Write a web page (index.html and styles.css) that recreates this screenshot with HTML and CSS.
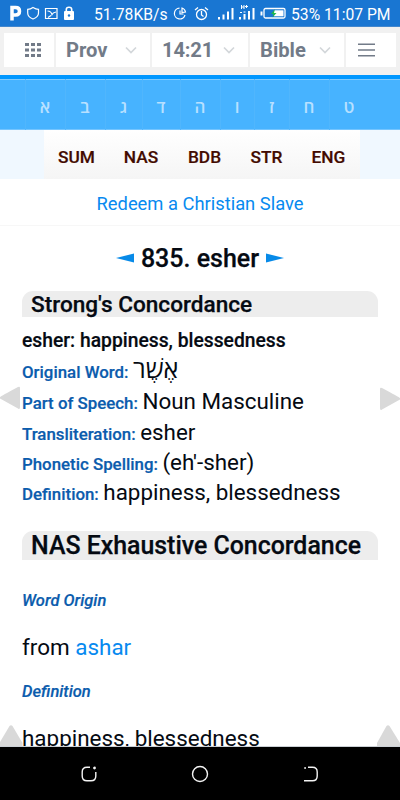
FILE: index.html
```html
<!DOCTYPE html>
<html lang="en">
<head>
<meta charset="utf-8">
<title>Strong's Hebrew: 835. esher</title>
<link rel="stylesheet" href="styles.css">
</head>
<body>
<div class="phone">
  <header class="status">
    <svg class="status-left" width="60" height="27" viewBox="0 0 60 27" fill="none" stroke="#fff">
      <path d="M12 20.500V7.500H15.500Q19.500 7.500 19.500 11.200T15.500 15H12" stroke-width="3.500"/>
      <path d="M33 7.500Q36 9.300 38.500 9.300V13Q38.500 17 33 19Q27.700 17 27.700 13V9.300Q30.500 9.300 33 7.500Z" stroke-width="1.200"/>
      <path d="M45.500 8.500H57V18.500H45.500ZM47.500 11Q51 11 52 14.500Q53 12.500 56 12M48 17.500L51 15.500" stroke-width="1.200"/>
    </svg>
    <svg class="lock" width="12" height="27" viewBox="0 0 12 27" fill="none">
      <path d="M3.300 12V9.500Q3.300 7.300 6 7.300T8.700 9.500V12" stroke="#fff" stroke-width="1.600"/>
      <rect x="1" y="11" width="10" height="9" rx="1" fill="#fff"/><circle cx="6" cy="15.500" r="1.200" fill="#1976d2"/>
    </svg>
    <span class="speed">51.78KB/s</span>
    <svg class="status-mid" width="117" height="27" viewBox="171 0 117 27" fill="none" stroke="#fff">
      <path d="M179.500 8.200A5.400 5.400 0 1 0 185 15M180 10.500V14H183.500M182 8Q185 9 185.500 12L182 12.500Z" stroke-width="1.200"/>
      <circle cx="201.500" cy="14.500" r="5" stroke-width="1.300"/><path d="M201.500 11V15L203.500 16.500M195 10L198 7.500M205 7.500L208 10" stroke-width="1.300"/>
      <path d="M219 19.500V17M223.500 19.500V14.500M228 19.500V11.500M232.500 19.500V8" stroke-width="2"/>
      <path d="M240 19.500V17M244.500 19.500V14M249 19.500V11M253.500 19.500V8" stroke-width="2"/>
      <path d="M241.500 5V9M244 5V9M241.500 7H244M245 6.500H248M246.500 5V8M240 12.500H242M243.500 12H245.500" stroke-width="1"/>
      <rect x="264" y="8.500" width="21" height="9.500" rx="1.500" stroke-width="1.300"/><path d="M261.500 11.500V15.500" stroke-width="2"/>
      <rect x="274" y="10.300" width="9.500" height="6" fill="#fff" stroke="none"/><path d="M275 9L271 14H273.500L272.500 17.500L276.500 13H274Z" fill="#20b84a" stroke="none"/>
    </svg>
    <span class="clock">53% 11:07 PM</span>
  </header>

  <nav class="toolbar">
    <div class="cell dots">
      <svg width="18" height="16" viewBox="0 0 18 16" fill="#727b88"><path d="M1 1h4v3H1zM7 1h4v3H7zM13 1h4v3H13zM1 6.500h4v3H1zM7 6.500h4v3H7zM13 6.500h4v3H13zM1 12h4v3H1zM7 12h4v3H7zM13 12h4v3H13z"/></svg>
    </div>
    <div class="cell pick book"><span>Prov</span><svg class="chev" viewBox="0 0 12 8"><path d="M1 1.500L6 6.500L11 1.500"/></svg></div>
    <div class="cell pick verse"><span>14:21</span><svg class="chev" viewBox="0 0 12 8"><path d="M1 1.500L6 6.500L11 1.500"/></svg></div>
    <div class="cell pick bible"><span>Bible</span><svg class="chev" viewBox="0 0 12 8"><path d="M1 1.500L6 6.500L11 1.500"/></svg></div>
    <div class="cell menu"><svg width="17" height="14" viewBox="0 0 17 14" stroke="#727b88" stroke-width="1.500"><path d="M0 1.200H17M0 7H17M0 12.700H17"/></svg></div>
  </nav>

  <nav class="letters">
    <span>א</span><span>ב</span><span>ג</span><span>ד</span><span>ה</span><span>ו</span><span>ז</span><span>ח</span><span>ט</span>
  </nav>

  <nav class="tabs">
    <div class="tabset"><span>SUM</span><span>NAS</span><span>BDB</span><span>STR</span><span>ENG</span></div>
  </nav>

  <div class="promo"><a>Redeem a Christian Slave</a></div>

  <main class="content">
    <h1><svg width="18" height="10" viewBox="0 0 18 10"><path d="M0 5L18 .5V9.500Z"/></svg><span>835. esher</span><svg width="18" height="10" viewBox="0 0 18 10"><path d="M18 5L0 .5V9.500Z"/></svg></h1>
    <h2 class="strongs"><span>Strong's Concordance</span></h2>
    <p class="summary">esher: happiness, blessedness</p>
    <p class="row"><b>Original Word:</b><span class="hebrew" lang="he">אֶשֶׁר</span></p>
    <p class="row"><b>Part of Speech:</b><span>Noun Masculine</span></p>
    <p class="row"><b>Transliteration:</b><span>esher</span></p>
    <p class="row"><b>Phonetic Spelling:</b><span>(eh'-sher)</span></p>
    <p class="row"><b>Definition:</b><span>happiness, blessedness</span></p>
    <h2 class="nas"><span>NAS Exhaustive Concordance</span></h2>
    <h3>Word Origin</h3>
    <p class="text">from <a>ashar</a></p>
    <h3>Definition</h3>
    <p class="text">happiness, blessedness</p>
    <svg class="arrow prev" width="20" height="24" viewBox="0 0 20 24"><path d="M0 11Q1 10 18 1Q20 0 20 2V21Q20 24 18 22.500L0 12.500Z"/></svg>
    <svg class="arrow next" width="20" height="24" viewBox="0 0 20 24"><path d="M20 11Q19 10 2 1Q0 0 0 2V21Q0 24 2 22.500L20 12.500Z"/></svg>
    <svg class="arrow up-left" width="23" height="21" viewBox="0 0 23 21"><path d="M0 17L9.500 1Q11 -.5 12.500 1L22.500 18V21H0Z"/></svg>
    <svg class="arrow up-right" width="23" height="21" viewBox="0 0 23 21"><path d="M0 18L9.500 1Q11 -.5 12.500 1L23 18V21H0Z"/></svg>
  </main>

  <footer class="navbar">
    <svg width="16" height="16" viewBox="0 0 16 16"><path d="M9 1.200H6Q1.200 1.200 1.200 6V10Q1.200 14.800 6 14.800H10Q14.800 14.800 14.800 10V6"/><circle cx="13.500" cy="2" r=".7"/></svg>
    <svg width="18" height="18" viewBox="0 0 18 18"><circle cx="9" cy="9" r="7.500"/></svg>
    <svg width="16" height="16" viewBox="0 0 16 16"><path d="M5 1.200H9.500Q14.200 1.200 14.200 6V10Q14.200 14.800 9.500 14.800H1M1.200 2H3"/></svg>
  </footer>
</div>
</body>
</html>
```

FILE: styles.css
```css
* { box-sizing: border-box; }
body { margin: 0; font-family: Roboto, "Liberation Sans", sans-serif; background: #fff; }
h1, h2, h3, p { margin: 0; font-weight: 400; white-space: nowrap; }
a { color: #078af0; }
svg { flex: none; display: block; }
.phone { width: 400px; height: 800px; overflow: hidden; display: flex; flex-direction: column; }

.status { height: 27px; flex: none; background: #1976d2; color: #fff; display: flex; align-items: center; font-size: 16px; line-height: 27px; white-space: nowrap; border-bottom: 1px solid #4387cd; }
.lock { margin-left: 3px; }
.speed { width: 76px; margin-left: 19px; padding-top: 2px; font-size: 15.700px; }
.status-mid { margin-left: 1px; }
.clock { margin-left: 3px; padding-top: 2px; font-size: 15.700px; }

.toolbar { height: 48px; flex: none; background: #f1f1f1; display: grid; grid-template-columns: 50px 94px 96px 94px 50px; gap: 2px; padding: 6px 4px 8px; }
.cell { background: #fff; display: flex; align-items: center; }
.dots { padding-left: 20px; }
.menu { padding-left: 12px; }
.pick { justify-content: space-between; padding: 0 13px 0 10px; color: #727b88; font-weight: 700; font-size: 20.200px; }
.verse span { letter-spacing: -.2px; }
.chev { width: 12px; height: 8px; fill: none; stroke: #d3d7da; stroke-width: 1.7; }

.letters { height: 55px; flex: none; background: #47b3ff; border-top: 4px solid #0097ff; border-bottom: 1px solid #75c5ff; box-shadow: inset 0 1px #80cbff; display: grid; grid-template-columns: 40px 40px 37px 38px 40px 34px 35px 40px 40px; padding-left: 25px; color: #b8e0ff; font: 600 17px/56px "Open Sans", sans-serif; text-align: center; }
.letters span { border-left: 1px solid #50b6fd; padding-right: 1px; }

.tabs { height: 49px; flex: none; background: #f0f8ff; padding: 0 40px 0 44px; }
.tabset { height: 49px; display: grid; grid-template-columns: 65px 64px 63px 61px 63px; background: linear-gradient(#fff, #f5f5f5); color: #430b00; font-size: 17.300px; font-weight: 500; line-height: 54px; text-align: center; -webkit-text-stroke: .2px; }

.promo { height: 47px; flex: none; border-bottom: 1px solid #f7f7f7; text-align: center; font-size: 18.350px; line-height: 50px; }

.content { position: relative; height: 521px; flex: none; padding: 14px 22px 0; overflow: hidden; color: #050a12; border-bottom: 1px solid #cbd0d5; }
h1 { height: 36px; display: flex; justify-content: center; align-items: center; gap: 7px; font-size: 25px; font-weight: 500; -webkit-text-stroke: .25px; }
h1 svg { fill: #078ae8; }
h2 { background: #ededed; border-radius: 11px 11px 0 0; padding-left: 9px; font-weight: 500; -webkit-text-stroke: .25px; }
.strongs { height: 26px; margin-top: 15px; font-size: 22.600px; line-height: 27px; }
.nas { height: 29px; margin-top: 24px; font-size: 24.900px; line-height: 29px; }
.summary { font-size: 19.300px; font-weight: 500; line-height: 24px; height: 24px; margin-top: 12px; margin-bottom: 2px; -webkit-text-stroke: .2px; }
.row { display: flex; align-items: baseline; height: 30.300px; line-height: 30px; font-size: 22.400px; }
.row b { font-size: 16.850px; font-weight: 500; color: #0b5cad; margin-right: 4.500px; -webkit-text-stroke: .2px; }
.row .hebrew { font: 25.300px/26px "Open Sans", sans-serif; }
.row:has(.hebrew) { margin-bottom: 1px; }
h3 { height: 20px; line-height: 20px; margin-top: 31px; font-size: 16.500px; font-weight: 500; font-style: italic; color: #0b5cad; -webkit-text-stroke: .2px; }
.text { height: 30px; line-height: 30px; margin-top: 21px; font-size: 22.450px; }
.text + h3 { margin-top: 20px; }

.arrow { position: absolute; fill: #d9d9d9; }
.prev { left: 0; top: 160px; }
.next { right: 0; top: 161px; }
.up-left { left: 0; bottom: 0; }
.up-right { right: 0; bottom: 0; }

.navbar { flex: 1; background: #000; display: grid; grid-template-columns: 44.500% 11% 44.500%; justify-items: center; align-items: center; }
.navbar svg { fill: none; stroke: #f4f4f4; stroke-width: 1.400; }
```
